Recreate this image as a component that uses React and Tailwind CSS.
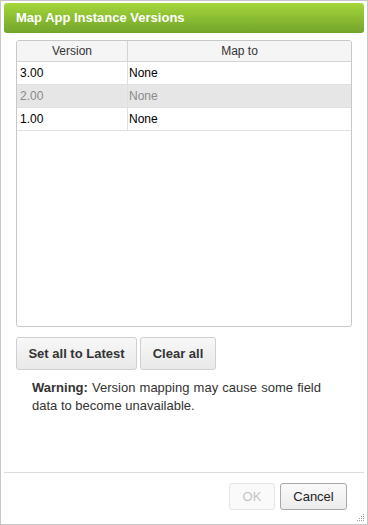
import React from 'react';

const rows = [
  { version: '3.00', map: 'None', disabled: false },
  { version: '2.00', map: 'None', disabled: true },
  { version: '1.00', map: 'None', disabled: false },
];

const App = () => {
  return (
    <div
      className="w-[368px] h-[525px] bg-white border border-[#c6c6c6] flex flex-col relative"
      style={{ fontFamily: '"Liberation Sans", Arial, sans-serif' }}
    >
      <div className="mx-[3px] mt-[2px] h-[30px] rounded-[3px] bg-gradient-to-b from-[#a5d63a] to-[#72a52c] flex items-center px-3">
        <h1 className="text-white font-bold text-[13px]">Map App Instance Versions</h1>
      </div>

      <div className="mx-[15px] mt-[7px] h-[287px] border border-[#c8c8c8] rounded-[3px] overflow-hidden">
        <div className="grid grid-cols-[111px_1fr] h-[21px] bg-[#f5f5f5] border-b border-[#d4d4d4] text-[12px] text-[#333]">
          <div className="flex items-center justify-center border-r border-[#d4d4d4]">Version</div>
          <div className="flex items-center justify-center">Map to</div>
        </div>
        {rows.map((r) => (
          <div
            key={r.version}
            className={
              r.disabled
                ? 'grid grid-cols-[111px_1fr] h-[23px] bg-[#e6e6e6] text-[12px] text-[#8a8a8a] border-b border-[#e0e0e0]'
                : 'grid grid-cols-[111px_1fr] h-[23px] bg-white text-[12px] text-black border-b border-[#e0e0e0]'
            }
          >
            <div className="flex items-center px-[3px] border-r border-[#e0e0e0]">{r.version}</div>
            <div className="flex items-center px-[1px]">{r.map}</div>
          </div>
        ))}
      </div>

      <div className="mx-[15px] mt-[10px] flex gap-[3px]">
        <button className="h-[33px] w-[121px] rounded-[3px] border border-[#cfcfcf] bg-gradient-to-b from-[#f8f8f8] to-[#e9e9e9] text-[13px] font-bold text-[#333]">
          Set all to Latest
        </button>
        <button className="h-[33px] w-[76px] rounded-[3px] border border-[#cfcfcf] bg-gradient-to-b from-[#f8f8f8] to-[#e9e9e9] text-[13px] font-bold text-[#333]">
          Clear all
        </button>
      </div>

      <p className="mx-[31px] mt-[9px] w-[289px] text-[13px] leading-[18px] text-[#333] text-justify">
        <span className="font-bold">Warning:</span> Version mapping may cause some field data to become unavailable.
      </p>

      <div className="mt-auto mx-[3px] border-t border-[#dcdcdc] h-[52px] flex items-start justify-end gap-[5px] pt-[10px] pr-[17px]">
        <button className="h-[27px] w-[46px] rounded-[3px] border border-[#e6e6e6] bg-[#fafafa] text-[13px] text-[#c4c4c4]">
          OK
        </button>
        <button className="h-[27px] w-[67px] rounded-[3px] border border-[#a8a8a8] bg-gradient-to-b from-[#fafafa] to-[#ececec] text-[13px] text-[#222]">
          Cancel
        </button>
      </div>

      <svg className="absolute right-[2px] bottom-[2px]" width="10" height="10" viewBox="0 0 10 10">
        <g fill="#a0a0a0">
          <rect x="8" y="2" width="1" height="1" />
          <rect x="6" y="4" width="1" height="1" />
          <rect x="8" y="4" width="1" height="1" />
          <rect x="4" y="6" width="1" height="1" />
          <rect x="6" y="6" width="1" height="1" />
          <rect x="8" y="6" width="1" height="1" />
          <rect x="2" y="8" width="1" height="1" />
          <rect x="4" y="8" width="1" height="1" />
          <rect x="6" y="8" width="1" height="1" />
          <rect x="8" y="8" width="1" height="1" />
        </g>
      </svg>
    </div>
  );
};

export default App;
